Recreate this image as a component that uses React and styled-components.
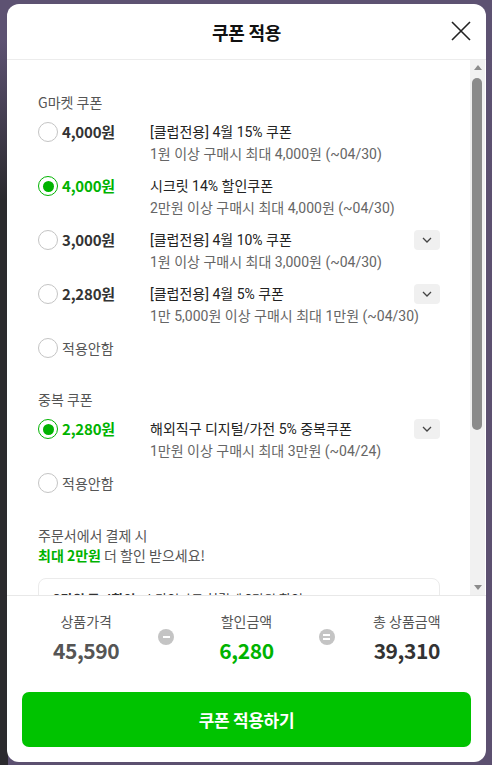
import React, { useState } from 'react';
import styled, { createGlobalStyle, css } from 'styled-components';

const GREEN = '#00b300';

const GlobalStyle = createGlobalStyle`
  * { box-sizing: border-box; }
  html, body { margin: 0; height: 100%; }
  body {
    font-family: "Noto Sans CJK KR", sans-serif;
    background:
      linear-gradient(to bottom, #5d5272 0px, #5d5272 40px, rgba(93, 82, 114, 0) 200px),
      linear-gradient(to right, #2b2a2e 0px, #2b2a2e 8px, #5c5070 8px);
  }
  #root { height: 100%; padding: 4px 6px 3px 7px; }
`;

const Modal = styled.div`
  height: 100%;
  background: #fff;
  border-radius: 12px;
  display: flex;
  flex-direction: column;
  overflow: hidden;
`;

const Header = styled.header`
  height: 56px;
  flex: none;
  border-bottom: 1px solid #ececec;
  display: flex;
  align-items: center;
  justify-content: center;
  position: relative;
`;

const Title = styled.h1`
  margin: 0;
  font-size: 18px;
  font-weight: 700;
  color: #111;
  letter-spacing: -0.3px;
`;

const CloseButton = styled.button`
  position: absolute;
  right: 14px;
  top: 16px;
  width: 22px;
  height: 22px;
  border: 0;
  padding: 0;
  background: none;
  cursor: pointer;
`;

const Body = styled.div`
  flex: 1;
  min-height: 0;
  display: flex;
`;

const Viewport = styled.div`
  flex: 1;
  min-width: 0;
  overflow: hidden;
`;

const ScrollBar = styled.div`
  flex: none;
  width: 15px;
  margin-right: 1px;
  background: #f1f1f1;
  display: flex;
  flex-direction: column;
  align-items: center;
`;

const Arrow = styled.span`
  flex: none;
  height: 15px;
  width: 100%;
  display: flex;
  align-items: center;
  justify-content: center;
  &::before {
    content: '';
    border-left: 4.5px solid transparent;
    border-right: 4.5px solid transparent;
    ${({ $dir }) => ($dir === 'up'
    ? css`border-bottom: 5px solid #8b8b8b;`
    : css`border-top: 5px solid #8b8b8b;`)}
  }
`;

const Track = styled.div`
  flex: 1;
  width: 100%;
  padding: 3px 3px 0 2px;
`;

const Thumb = styled.div`
  height: 352px;
  border-radius: 5px;
  background: #8b8b8b;
`;

const Content = styled.div`
  padding: 32px 30px 40px 31px;
`;

const Section = styled.section`
  & + & { margin-top: 30px; }
`;

const SectionTitle = styled.h2`
  margin: 0 0 9px;
  font-size: 14px;
  line-height: 20px;
  font-weight: 400;
  color: #555;
`;

const List = styled.div`
  display: flex;
  flex-direction: column;
  gap: 10px;
`;

const Row = styled.label`
  display: grid;
  grid-template-columns: 24px 88px minmax(0, 1fr) 26px;
  align-items: start;
  cursor: pointer;
`;

const Radio = styled.span`
  width: 20px;
  height: 20px;
  margin-top: 1px;
  border-radius: 50%;
  border: 1px solid #c4c4c4;
  display: flex;
  align-items: center;
  justify-content: center;
  ${({ $checked }) => $checked && css`
    border: 1.5px solid ${GREEN};
    &::after {
      content: '';
      width: 11px;
      height: 11px;
      border-radius: 50%;
      background: ${GREEN};
    }
  `}
`;

const Amount = styled.span`
  font-size: 15px;
  line-height: 22px;
  font-weight: 700;
  letter-spacing: -0.2px;
  color: ${({ $checked }) => ($checked ? GREEN : '#333')};
`;

const NoneLabel = styled.span`
  font-size: 14px;
  line-height: 22px;
  color: #555;
`;

const Desc = styled.div`
  font-family: Roboto, "Noto Sans CJK KR", sans-serif;
  font-size: 14px;
  line-height: 22px;
  white-space: nowrap;
`;

const DescTitle = styled.div`
  color: #222;
`;

const DescSub = styled.div`
  color: #666;
`;

const Expand = styled.button`
  width: 26px;
  height: 20px;
  margin-top: 1px;
  border: 0;
  border-radius: 4px;
  background: #f0f0f0;
  padding: 0;
  display: flex;
  align-items: center;
  justify-content: center;
`;

const Promo = styled.div`
  margin-top: 31px;
  font-size: 14px;
  line-height: 20px;
  color: #555;
  b { color: ${GREEN}; font-weight: 700; }
`;

const PromoBox = styled.div`
  margin-top: 13px;
  border: 1px solid #ebebeb;
  border-radius: 8px;
  padding: 10px 14px;
  font-size: 13px;
  line-height: 20px;
  color: #333;
  b { font-weight: 700; margin-right: 8px; }
`;

const Footer = styled.footer`
  flex: none;
  border-top: 1px solid #e8e8e8;
  padding: 14px 15px 15px;
`;

const Summary = styled.div`
  display: grid;
  grid-template-columns: 1fr 16px 1fr 16px 1fr;
  align-items: center;
  padding: 0 0 29px;
  margin: 0 -8px;
`;

const Cell = styled.div`
  text-align: center;
`;

const CellLabel = styled.div`
  font-size: 14px;
  line-height: 22px;
  color: #555;
`;

const CellValue = styled.div`
  margin-top: 5px;
  font-size: 21px;
  line-height: 26px;
  font-weight: 700;
  letter-spacing: -0.4px;
  color: ${({ $color }) => $color};
`;

const Operator = styled.span`
  width: 16px;
  height: 16px;
  border-radius: 50%;
  background: #c4c4c4;
  display: flex;
  flex-direction: column;
  align-items: center;
  justify-content: center;
  gap: 2px;
  &::before, &::after {
    content: '';
    width: 7px;
    height: 2px;
    background: #fff;
  }
  ${({ $type }) => $type === 'minus' && css`
    &::after { display: none; }
  `}
`;

const ApplyButton = styled.button`
  width: 100%;
  height: 55px;
  border: 0;
  border-radius: 7px;
  background: #00c300;
  color: #fff;
  font-family: "Noto Sans CJK KR", sans-serif;
  font-size: 17px;
  font-weight: 700;
  letter-spacing: -0.3px;
  cursor: pointer;
`;

const Chevron = () => (
  <svg width="10" height="6" viewBox="0 0 10 6">
    <path d="M1 1l4 4 4-4" fill="none" stroke="#444" strokeWidth="1.3" />
  </svg>
);

const gmarket = [
  { id: 'g1', amount: '4,000원', title: '[클럽전용] 4월 15% 쿠폰', sub: '1원 이상 구매시 최대 4,000원 (~04/30)' },
  { id: 'g2', amount: '4,000원', title: '시크릿 14% 할인쿠폰', sub: '2만원 이상 구매시 최대 4,000원 (~04/30)' },
  { id: 'g3', amount: '3,000원', title: '[클럽전용] 4월 10% 쿠폰', sub: '1원 이상 구매시 최대 3,000원 (~04/30)', more: true },
  { id: 'g4', amount: '2,280원', title: '[클럽전용] 4월 5% 쿠폰', sub: '1만 5,000원 이상 구매시 최대 1만원 (~04/30)', more: true },
];

const duplicate = [
  { id: 'd1', amount: '2,280원', title: '해외직구 디지털/가전 5% 중복쿠폰', sub: '1만원 이상 구매시 최대 3만원 (~04/24)', more: true },
];

const CouponList = ({ items, selected, onSelect }) => (
  <List>
    {items.map((c) => (
      <Row key={c.id} onClick={() => onSelect(c.id)}>
        <Radio $checked={selected === c.id} />
        <Amount $checked={selected === c.id}>{c.amount}</Amount>
        <Desc>
          <DescTitle>{c.title}</DescTitle>
          <DescSub>{c.sub}</DescSub>
        </Desc>
        {c.more && <Expand type="button"><Chevron /></Expand>}
      </Row>
    ))}
    <Row onClick={() => onSelect('none')}>
      <Radio $checked={selected === 'none'} />
      <NoneLabel>적용안함</NoneLabel>
    </Row>
  </List>
);

export default function App() {
  const [first, setFirst] = useState('g2');
  const [second, setSecond] = useState('d1');

  return (
    <>
      <GlobalStyle />
      <Modal>
        <Header>
          <Title>쿠폰 적용</Title>
          <CloseButton type="button" aria-label="닫기">
            <svg width="22" height="22" viewBox="0 0 22 22">
              <path d="M2 2l18 18M20 2L2 20" stroke="#222" strokeWidth="1.6" />
            </svg>
          </CloseButton>
        </Header>
        <Body>
          <Viewport>
            <Content>
              <Section>
                <SectionTitle>G마켓 쿠폰</SectionTitle>
                <CouponList items={gmarket} selected={first} onSelect={setFirst} />
              </Section>
              <Section>
                <SectionTitle>중복 쿠폰</SectionTitle>
                <CouponList items={duplicate} selected={second} onSelect={setSecond} />
              </Section>
              <Promo>
                주문서에서 결제 시
                <br />
                <b>최대 2만원</b> 더 할인 받으세요!
              </Promo>
              <PromoBox>
                <div><b>3만원 즉시할인</b>스마일카드 첫결제 3만원 할인</div>
              </PromoBox>
            </Content>
          </Viewport>
          <ScrollBar>
            <Arrow $dir="up" />
            <Track><Thumb /></Track>
            <Arrow $dir="down" />
          </ScrollBar>
        </Body>
        <Footer>
          <Summary>
            <Cell>
              <CellLabel>상품가격</CellLabel>
              <CellValue $color="#555">45,590</CellValue>
            </Cell>
            <Operator $type="minus" />
            <Cell>
              <CellLabel>할인금액</CellLabel>
              <CellValue $color={GREEN}>6,280</CellValue>
            </Cell>
            <Operator $type="equals" />
            <Cell>
              <CellLabel>총 상품금액</CellLabel>
              <CellValue $color="#333">39,310</CellValue>
            </Cell>
          </Summary>
          <ApplyButton type="button">쿠폰 적용하기</ApplyButton>
        </Footer>
      </Modal>
    </>
  );
}
